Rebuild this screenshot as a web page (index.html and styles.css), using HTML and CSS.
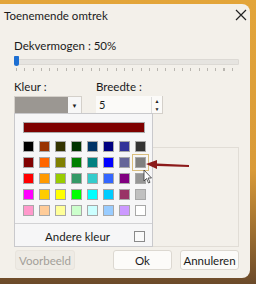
FILE: index.html
```html
<!DOCTYPE html>
<html lang="nl">
<head>
  <meta charset="UTF-8" />
  <title>Toenemende omtrek</title>
  <link rel="stylesheet" href="styles.css">
</head>
<body>
  <div class="dialog">
    <!-- titelbalk -->
    <div class="titlebar">
      <span class="title">Toenemende omtrek</span>
      <svg class="close" width="12" height="12" viewBox="0 0 12 12">
        <path d="M1 1 L11 11 M11 1 L1 11" stroke="#222" stroke-width="1.2" fill="none" />
      </svg>
    </div>

    <div class="content">
      <div class="label">Dekvermogen : 50%</div>
      <div class="slider">
        <div class="track"></div>
        <div class="thumb"></div>
      </div>
      <div class="ticks"></div>

      <div class="fields">
        <div class="field">
          <div class="label">Kleur :</div>
          <div class="combo">
            <div class="swatch-big"></div>
            <div class="combo-btn">&#9660;</div>
          </div>
        </div>
        <div class="field">
          <div class="label">Breedte :</div>
          <div class="spin">
            <span>5</span>
            <div class="spin-btns">
              <span>&#9650;</span>
              <span>&#9660;</span>
            </div>
          </div>
        </div>
      </div>

      <div class="preview"></div>

      <div class="buttons">
        <button class="btn disabled">Voorbeeld</button>
        <div class="right-btns">
          <button class="btn">Ok</button>
          <button class="btn">Annuleren</button>
        </div>
      </div>
    </div>

    <!-- open kleurkeuze -->
    <div class="popup">
      <div class="current"></div>
      <div class="grid" id="grid"></div>
      <div class="sep"></div>
      <div class="more">
        <span>Andere kleur</span>
        <span class="chk"></span>
      </div>
    </div>

    <svg class="arrow" width="46" height="16" viewBox="0 0 46 16">
      <path d="M44 9 L12 7.5 L12 4 L1 8 L12 13 L12 10 L44 11 Z" fill="#8c1a1a" />
    </svg>
    <svg class="cursor" width="10" height="15" viewBox="0 0 10 15">
      <path d="M1 1 L1 12 L3.5 9.5 L5.5 14 L7 13.3 L5 9 L8.5 9 Z" fill="#fff" stroke="#333" stroke-width="0.8" />
    </svg>
  </div>

  <script>
    const colors = [
      '#000000', '#993300', '#333300', '#003300', '#003366', '#000080', '#333399', '#333333',
      '#800000', '#ff6600', '#808000', '#008000', '#008080', '#0000ff', '#666699', '#808080',
      '#ff0000', '#ff9900', '#99cc00', '#339966', '#33cccc', '#3366ff', '#800080', '#969696',
      '#ff00ff', '#ffcc00', '#ffff00', '#00ff00', '#00ffff', '#00ccff', '#993366', '#c0c0c0',
      '#ff99cc', '#ffcc99', '#ffff99', '#ccffcc', '#ccffff', '#99ccff', '#cc99ff', '#ffffff'
    ];
    const grid = document.getElementById('grid');
    colors.forEach((c, i) => {
      const cell = document.createElement('div');
      cell.className = 'cell' + (i === 15 ? ' selected' : '');
      cell.innerHTML = `<div class="sw" style="background:${c}"></div>`;
      grid.appendChild(cell);
    });
  </script>
</body>
</html>
```

FILE: styles.css
```css
body {
  margin: 0;
  width: 256px;
  height: 284px;
  overflow: hidden;
  font-family: 'Lato', 'Noto Sans', sans-serif;
  font-size: 11px;
  color: #1a1a1a;
  background: linear-gradient(180deg, #e3a53a 0%, #d99a38 60%, #6b4a2a 100%);
}
.dialog {
  position: relative;
  width: 250px;
  height: 274px;
  margin-top: 4px;
  background: #f3f0ea;
  border-radius: 0 8px 8px 0;
  box-sizing: border-box;
}
.titlebar {
  height: 22px;
  display: flex;
  align-items: center;
  justify-content: space-between;
  padding: 0 3px 0 4px;
}
.title {
  font-size: 11.5px;
}
.content {
  padding: 12px 11px 0 14px;
}
.label {
  font-size: 11.5px;
  line-height: 16px;
}
.slider {
  position: relative;
  height: 12px;
  margin-top: 2px;
}
.track {
  position: absolute;
  left: 0;
  right: 0;
  top: 3px;
  height: 4px;
  background: #e6e4e0;
  border: 1px solid #dcd9d4;
  border-radius: 1px;
}
.thumb {
  position: absolute;
  left: 0;
  top: 0;
  width: 5px;
  height: 10px;
  background: #1d6fd2;
  border-radius: 1px 1px 3px 3px;
}
.ticks {
  height: 3px;
  margin: 0 2px;
  background: repeating-linear-gradient(90deg, #b9b6b0 0, #b9b6b0 1px, transparent 1px, transparent 8.3px);
}
.fields {
  display: flex;
  gap: 14px;
  margin-top: 8px;
}
.field .label {
  margin-bottom: 1px;
}
.combo {
  display: flex;
  width: 68px;
  height: 18px;
  border: 1px solid #d4d0ca;
  background: #fff;
  box-sizing: border-box;
}
.swatch-big {
  width: 53px;
  background: #9b9792;
}
.combo-btn {
  flex: 1;
  display: flex;
  align-items: center;
  justify-content: center;
  font-size: 6px;
  color: #222;
  background: #f7f7f7;
}
.spin {
  display: flex;
  align-items: center;
  justify-content: space-between;
  width: 67px;
  height: 18px;
  padding-left: 3px;
  box-sizing: border-box;
  background: #fbfaf8;
  border-right: 1px solid #d4d0ca;
  border-bottom: 1px solid #d4d0ca;
}
.spin-btns {
  display: flex;
  flex-direction: column;
  width: 10px;
  font-size: 5px;
  line-height: 8px;
  text-align: center;
  color: #222;
  border-left: 1px solid #ddd;
}
.preview {
  height: 98px;
  margin-top: 33px;
  border: 1px solid #e1ddd6;
}
.buttons {
  display: flex;
  justify-content: space-between;
  margin-top: 3px;
}
.right-btns {
  display: flex;
  gap: 8px;
}
.btn {
  height: 20px;
  padding: 0;
  width: 59px;
  font-family: 'Lato', 'Noto Sans', sans-serif;
  font-size: 11.5px;
  color: #1a1a1a;
  background: #fcfbf9;
  border: 1px solid #dcd8d1;
  border-radius: 3px;
}
.btn.disabled {
  width: 60px;
  margin-left: 1px;
  color: #a39f99;
  background: #eeebe5;
  border-color: #e8e4dd;
}
.popup {
  position: absolute;
  left: 14px;
  top: 109px;
  width: 139px;
  height: 134px;
  box-sizing: border-box;
  padding: 8px 7px 0 8px;
  background: #f6f6f7;
  border: 1px solid #c9c9cc;
}
.current {
  height: 11px;
  background: #7e0000;
  border: 1px solid #a9a9a9;
  box-sizing: border-box;
}
.grid {
  display: grid;
  grid-template-columns: repeat(8, 11px);
  grid-auto-rows: 11px;
  column-gap: 5px;
  row-gap: 5px;
  margin-top: 8px;
}
.cell {
  position: relative;
}
.sw {
  width: 11px;
  height: 11px;
  box-sizing: border-box;
  border: 1px solid #a8a8a8;
}
.cell.selected::before {
  content: '';
  position: absolute;
  left: -3px;
  top: -3px;
  width: 17px;
  height: 17px;
  box-sizing: border-box;
  border: 1.5px solid #d9bd7d;
}
.sep {
  height: 1px;
  background: #d2d2d4;
  margin: 7px -7px 0 -8px;
}
.more {
  display: flex;
  align-items: center;
  justify-content: flex-end;
  gap: 24px;
  height: 24px;
  font-size: 11.5px;
}
.chk {
  width: 9px;
  height: 9px;
  border: 1px solid #8a8a8a;
  background: #fafafa;
}
.arrow {
  position: absolute;
  left: 145px;
  top: 152px;
}
.cursor {
  position: absolute;
  left: 143px;
  top: 165px;
}
```
